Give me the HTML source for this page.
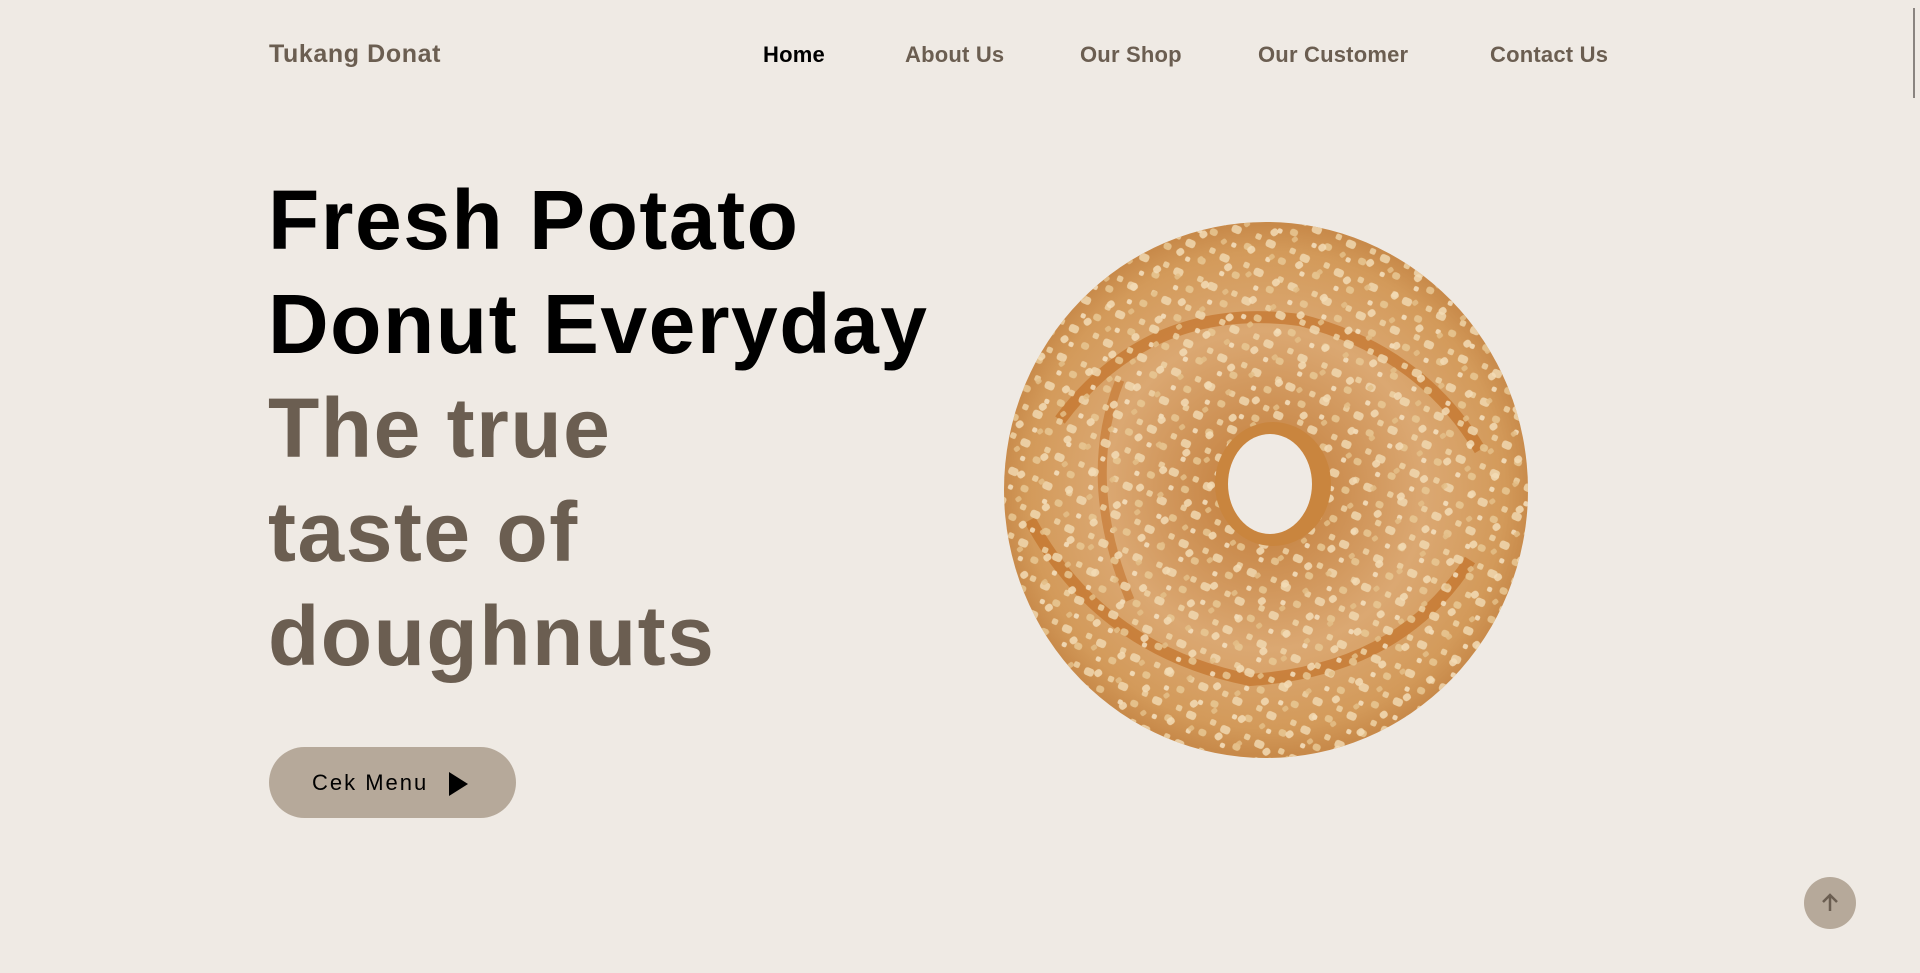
<!DOCTYPE html>
<html><head><meta charset="utf-8"><style>
html,body{margin:0;padding:0;}
body{width:1920px;height:973px;background:#efeae4;font-family:"Liberation Sans",sans-serif;position:relative;overflow:hidden;}
.logo{position:absolute;left:269px;top:40px;font-size:25px;font-weight:bold;color:#6b5e51;letter-spacing:0.6px;}
.nav a{position:absolute;top:42px;font-size:22px;color:#6b5e51;text-decoration:none;font-weight:bold;letter-spacing:0.2px;}
h1{position:absolute;left:268px;top:168px;margin:0;font-size:84px;line-height:104px;font-weight:bold;letter-spacing:1.5px;}
.b{color:#000;}.g{color:#6b5e51;}
.btn{position:absolute;left:269px;top:747px;width:247px;height:71px;border-radius:36px;background:#b6a99a;}
.btn span{position:absolute;left:43px;top:23px;font-size:22px;letter-spacing:2px;color:#000;}
.btn i{position:absolute;left:180px;top:25px;width:0;height:0;border-left:19px solid #000;border-top:12px solid transparent;border-bottom:12px solid transparent;}
.up{position:absolute;left:1804px;top:877px;width:52px;height:52px;border-radius:50%;background:#b6a99a;}
.sb{position:absolute;left:1913px;top:8px;width:2px;height:90px;background:#8a8480;}
</style></head><body>
<div class="logo">Tukang Donat</div>
<div class="nav">
<a style="left:763px;color:#000">Home</a>
<a style="left:905px">About Us</a>
<a style="left:1080px">Our Shop</a>
<a style="left:1258px">Our Customer</a>
<a style="left:1490px">Contact Us</a>
</div>
<h1><span class="b">Fresh Potato<br>Donut Everyday</span><br><span class="g">The true<br>taste of<br>doughnuts</span></h1>
<div class="btn"><span>Cek Menu</span><i></i></div>
<svg style="position:absolute;left:990px;top:210px" width="560" height="560" viewBox="990 210 560 560">
<defs>
<radialGradient id="d" cx="1266" cy="490" r="265" gradientUnits="userSpaceOnUse">
<stop offset="0.2" stop-color="#c9894a"/><stop offset="0.6" stop-color="#dba872"/><stop offset="0.9" stop-color="#d39a5a"/><stop offset="1" stop-color="#c88a4a"/></radialGradient>
<pattern id="n" width="37" height="31" patternUnits="userSpaceOnUse" patternTransform="rotate(23)">
<rect x="2" y="3" width="10" height="8" rx="3" fill="#f0d8b0"/><rect x="20" y="15" width="8" height="7" rx="3" fill="#e8c894"/><rect x="8" y="20" width="5" height="5" rx="2" fill="#f5e2c2"/><rect x="27" y="2" width="6" height="6" rx="2" fill="#eed3a6"/>
</pattern>
<pattern id="n2" width="29" height="41" patternUnits="userSpaceOnUse" patternTransform="rotate(-37)">
<rect x="4" y="6" width="8" height="7" rx="3" fill="#f3dcb6"/><rect x="17" y="25" width="6" height="5" rx="2" fill="#e4bf88"/>
</pattern>
</defs>
<ellipse cx="1266" cy="490" rx="262" ry="268" fill="url(#d)"/>
<path d="M1060 420 Q1150 300 1300 320 Q1420 350 1480 450" stroke="#c06a20" stroke-width="12" fill="none" opacity="0.6"/>
<path d="M1030 520 Q1100 650 1250 680 Q1400 670 1470 560" stroke="#c06a20" stroke-width="12" fill="none" opacity="0.6"/>
<path d="M1120 380 Q1080 480 1130 600" stroke="#c06a20" stroke-width="9" fill="none" opacity="0.5"/>
<ellipse cx="1266" cy="490" rx="262" ry="268" fill="url(#n)" opacity="0.85"/>
<ellipse cx="1266" cy="490" rx="262" ry="268" fill="url(#n2)" opacity="0.85"/>
<ellipse cx="1273" cy="484" rx="58" ry="62" fill="#c9853e"/>
<ellipse cx="1270" cy="484" rx="42" ry="50" fill="#efeae4"/>
</svg>
<div class="up"><svg width="52" height="52" viewBox="0 0 52 52"><path d="M26 34V19M19 25l7-7 7 7" stroke="#6b5e51" stroke-width="2.5" fill="none"/></svg></div>
<div class="sb"></div>
</body></html>
